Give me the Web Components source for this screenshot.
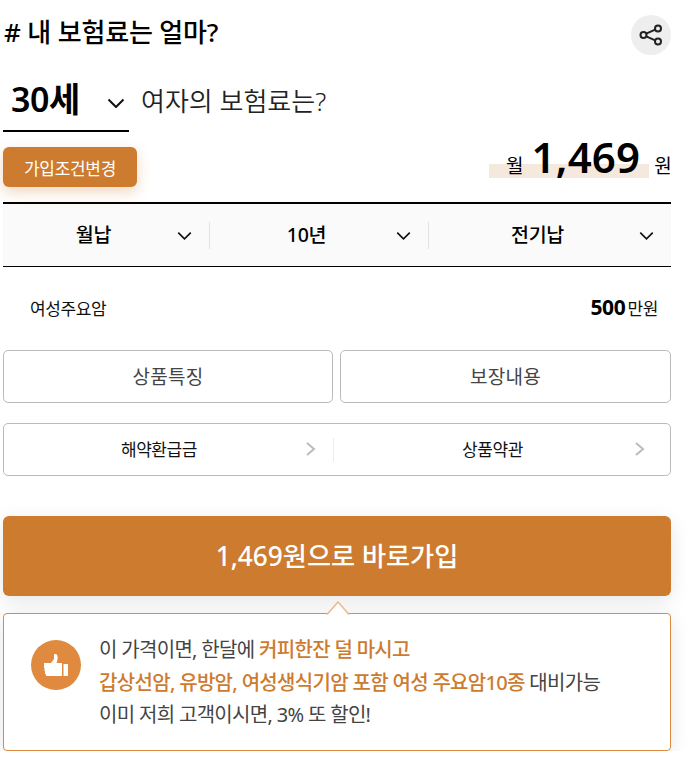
<!DOCTYPE html>
<html>
  <head>
    <meta charset="utf-8" />
    <title>내 보험료는 얼마?</title>
    <style>
      body {
        margin: 0;
        background: #fff;
        font-family: "Noto Sans", "Noto Sans CJK KR", sans-serif;
      }
    </style>
  </head>
  <body>
    <script type="text/javascript">
      const CHEVRON = `<svg width="18" height="10" viewBox="0 0 18 10" fill="none"><path d="M1.500 1.500l7.500 7.500 7.500-7.500" stroke="#111" stroke-width="2"/></svg>`;

      class PremiumHeader extends HTMLElement {
        constructor() {
          super();
          this.attachShadow({ mode: "open" });
          this.shadowRoot.innerHTML = `
          <style>
            :host { display:flex; justify-content:space-between; align-items:center; height:40px; margin-top:15px; }
            h1 { margin:0 0 6px 1px; font-size:26px; font-weight:500; color:#000; letter-spacing:-0.15px; line-height:36px; }
            .share { width:40px; height:40px; border-radius:50%; background:#eee; display:flex; align-items:center; justify-content:center; }
          </style>
          <h1><slot></slot></h1>
          <div class="share">
            <svg width="24" height="22" viewBox="0 0 24 22" fill="none" stroke="#222" stroke-width="2">
              <circle cx="19" cy="4.500" r="3"/><circle cx="4.500" cy="11" r="3"/><circle cx="19" cy="17.500" r="3"/>
              <path d="M7.200 9.700l9-4M7.200 12.300l9 4"/>
            </svg>
          </div>`;
        }
      }

      class AgeRow extends HTMLElement {
        constructor() {
          super();
          this.attachShadow({ mode: "open" });
          this.shadowRoot.innerHTML = `
          <style>
            :host { display:flex; align-items:flex-end; margin-top:21px; }
            .select { width:126px; height:56px; box-sizing:border-box; border-bottom:2px solid #000; display:flex; align-items:center; justify-content:space-between; padding:0 4px 9px 8px; font-size:34px; line-height:46px; font-weight:600; color:#000; letter-spacing:-0.5px; }
            .select svg { margin-top:8px; }
            .label { font-size:26px; font-weight:350; color:#222; margin:0 0 13px 12px; line-height:36px; }
          </style>
          <div class="select"><span>30세</span>${CHEVRON}</div>
          <div class="label"><slot></slot></div>`;
        }
      }

      class PriceRow extends HTMLElement {
        constructor() {
          super();
          this.attachShadow({ mode: "open" });
          this.shadowRoot.innerHTML = `
          <style>
            :host { display:flex; justify-content:space-between; align-items:flex-end; height:40px; margin-top:15px; }
            .change { width:134px; height:40px; border-radius:6px; background:#cd7b2e; color:#fff; font-size:17px; display:flex; align-items:center; justify-content:center; box-shadow:0 5px 14px rgba(205,123,46,.3); letter-spacing:-0.3px; }
            .price { position:relative; height:50px; width:182px; }
            .mark { position:absolute; left:0; bottom:9px; width:160px; height:14px; background:#f4e9dc; }
            .text { position:relative; display:flex; align-items:baseline; margin-left:17px; color:#000; line-height:40px; }
            .unit { font-size:19px; font-weight:400; }
            .num { font-size:42px; font-weight:600; margin:0 14px 0 8px; letter-spacing:0.2px; }
          </style>
          <div class="change"><slot name="change"></slot></div>
          <div class="price"><div class="mark"></div>
            <div class="text"><span class="unit">월</span><span class="num">1,469</span><span class="unit">원</span></div>
          </div>`;
        }
      }

      class OptionBar extends HTMLElement {
        constructor() {
          super();
          this.attachShadow({ mode: "open" });
          this.shadowRoot.innerHTML = `
          <style>
            :host { display:grid; grid-template-columns:207px 219px 242px; height:65px; box-sizing:border-box; margin-top:15px; background:#fafafa; border-top:2px solid #000; border-bottom:1px solid #000; align-items:center; }
          </style>
          <slot></slot>`;
        }
      }

      class OptionItem extends HTMLElement {
        constructor() {
          super();
          this.attachShadow({ mode: "open" });
          this.shadowRoot.innerHTML = `
          <style>
            :host { height:27px; display:flex; align-items:center; position:relative; justify-content:center; padding:0 25px 4px 0; font-size:19.500px; font-weight:500; color:#000; box-sizing:border-box; border-right:1px solid #e2e2e2; letter-spacing:-0.3px; }
            :host(:last-child) { border-right:0; }
            svg { position:absolute; right:17px; top:9px; }
          </style>
          <slot></slot>${CHEVRON.replace('width="18" height="10"', 'width="15" height="9"')}`;
        }
      }

      class CoverageRow extends HTMLElement {
        constructor() {
          super();
          this.attachShadow({ mode: "open" });
          this.shadowRoot.innerHTML = `
          <style>
            :host { display:flex; justify-content:space-between; align-items:center; height:83px; padding:0 13px 3px 27px; box-sizing:border-box; font-size:17px; color:#111; letter-spacing:-0.4px; }
            b { font-size:21px; font-weight:700; color:#000; letter-spacing:-0.3px; margin-right:2px; }
          </style>
          <slot></slot>
          <div><b>500</b>만원</div>`;
        }
      }

      class TabButtons extends HTMLElement {
        constructor() {
          super();
          this.attachShadow({ mode: "open" });
          this.shadowRoot.innerHTML = `
          <style>
            :host { display:grid; grid-template-columns:330px 331px; gap:7px; }
            ::slotted(span) { height:53px; box-sizing:border-box; border:1px solid #bbb; border-radius:5px; display:flex; align-items:center; justify-content:center; font-size:19px; color:#444; letter-spacing:0.3px; padding-bottom:2px; }
          </style>
          <slot></slot>`;
        }
      }

      class LinkButtons extends HTMLElement {
        constructor() {
          super();
          this.attachShadow({ mode: "open" });
          this.shadowRoot.innerHTML = `
          <style>
            :host { display:grid; grid-template-columns:330px 1fr; height:53px; box-sizing:border-box; border:1px solid #bbb; border-radius:5px; margin-top:20px; align-items:center; }
          </style>
          <slot></slot>`;
        }
      }

      class LinkItem extends HTMLElement {
        constructor() {
          super();
          this.attachShadow({ mode: "open" });
          this.shadowRoot.innerHTML = `
          <style>
            :host { height:24px; box-sizing:border-box; display:flex; align-items:center; justify-content:center; position:relative; padding:0 19px 2px 0; font-size:17px; color:#111; letter-spacing:-0.4px; border-right:1px solid #eee; }
            :host(:last-child) { border-right:0; }
            :host(:last-child) svg { right:24px; }
            svg { position:absolute; right:16px; top:3px; }
          </style>
          <slot></slot>
          <svg width="12" height="16" viewBox="0 0 12 16" fill="none"><path d="M2 2l7 6-7 6" stroke="#bbb" stroke-width="2"/></svg>`;
        }
      }

      class JoinButton extends HTMLElement {
        constructor() {
          super();
          this.attachShadow({ mode: "open" });
          this.shadowRoot.innerHTML = `
          <style>
            :host { display:flex; height:80px; padding-bottom:3px; box-sizing:border-box; margin-top:40px; border-radius:6px; background:#cd7b2e; color:#fff; align-items:center; justify-content:center; font-size:26.200px; font-weight:500; box-shadow:0 5px 20px rgba(0,0,0,.1); }
          </style>
          <slot></slot>`;
        }
      }

      class TipBox extends HTMLElement {
        constructor() {
          super();
          this.attachShadow({ mode: "open" });
          this.shadowRoot.innerHTML = `
          <style>
            :host { display:flex; align-items:flex-start; position:relative; height:138px; box-sizing:border-box; margin-top:17px; padding:26px 0 0 27px; background:#fff; border:1px solid #dd8a42; border-radius:4px; box-shadow:0 5px 20px rgba(0,0,0,.1); }
            .arrow { position:absolute; left:322px; top:-13px; }
            .icon { flex:none; width:50px; height:50px; border-radius:50%; background:#e08a3f; display:flex; align-items:center; justify-content:center; }
            .icon svg { margin-top:-1px; }
            .msg { margin:-6px 0 0 18px; font-size:20px; line-height:32.500px; color:#444; letter-spacing:-0.68px; }
          </style>
          <svg class="arrow" width="24" height="14" viewBox="0 0 24 14"><path d="M1 13.500L12 1l11 12.500" fill="#fff" stroke="#eab98c" stroke-width="1.500"/></svg>
          <div class="icon">
            <svg width="24" height="22" viewBox="0 0 24 22" fill="#fff">
              <path d="M0 9h7l3-4V1c0-1.300 3-1.300 3.500 1 .4 2-.2 5-1 7h5.500v13H3c-1 0-1.500-1-1.300-2H1v-3H0.500v-3H0z"/>
              <rect x="19.500" y="10" width="4.500" height="12"/>
            </svg>
          </div>
          <div class="msg"><slot></slot></div>`;
        }
      }

      class PremiumCard extends HTMLElement {
        constructor() {
          super();
          this.attachShadow({ mode: "open" });
          this.shadowRoot.innerHTML = `
          <style>
            :host { display:block; width:668px; margin-left:3px; padding-top:0.100px; }
          </style>
          <slot></slot>`;
        }
      }

      customElements.define("premium-header", PremiumHeader);
      customElements.define("age-row", AgeRow);
      customElements.define("price-row", PriceRow);
      customElements.define("option-bar", OptionBar);
      customElements.define("option-item", OptionItem);
      customElements.define("coverage-row", CoverageRow);
      customElements.define("tab-buttons", TabButtons);
      customElements.define("link-buttons", LinkButtons);
      customElements.define("link-item", LinkItem);
      customElements.define("join-button", JoinButton);
      customElements.define("tip-box", TipBox);
      customElements.define("premium-card", PremiumCard);
    </script>
    <premium-card>
      <premium-header># 내 보험료는 얼마?</premium-header>
      <age-row>여자의 보험료는?</age-row>
      <price-row><span slot="change">가입조건변경</span></price-row>
      <option-bar>
        <option-item>월납</option-item>
        <option-item>10년</option-item>
        <option-item>전기납</option-item>
      </option-bar>
      <coverage-row>여성주요암</coverage-row>
      <tab-buttons><span>상품특징</span><span>보장내용</span></tab-buttons>
      <link-buttons>
        <link-item>해약환급금</link-item>
        <link-item>상품약관</link-item>
      </link-buttons>
      <join-button>1,469원으로 바로가입</join-button>
      <tip-box>
        이 가격이면, 한달에 <b style="color:#cd7b2e;font-weight:500">커피한잔 덜 마시고</b><br />
        <b style="color:#cd7b2e;font-weight:500">갑상선암, 유방암, 여성생식기암 포함 여성 주요암10종</b> 대비가능<br />
        이미 저희 고객이시면, 3% 또 할인!
      </tip-box>
    </premium-card>
  </body>
</html>
